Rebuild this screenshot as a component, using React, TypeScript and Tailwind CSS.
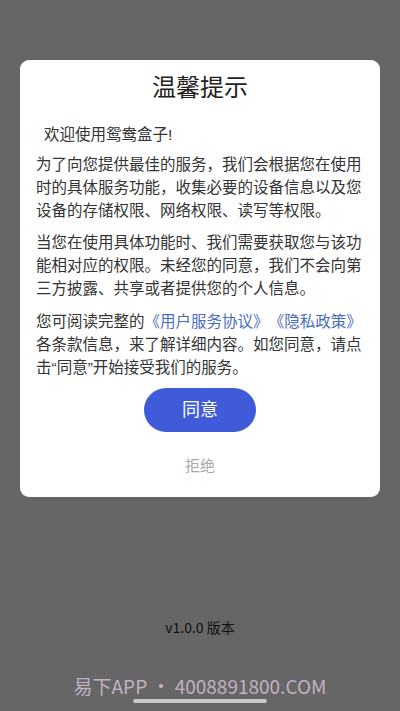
const body = "text-[15.5px] leading-[23px] text-[#333]";

export default function App() {
  return (
    <div
      className="relative flex h-[711px] w-[400px] flex-col items-center overflow-hidden bg-[#666666]"
      style={{ fontFamily: '"Noto Sans CJK SC", "Noto Sans", sans-serif' }}
    >
      <div
        className="mt-[60px] flex w-[360px] flex-col rounded-[9px] bg-white px-[16px] pt-[12px] pb-[21px]"
        style={{ fontFamily: '"Liberation Sans", "Noto Sans CJK SC", sans-serif' }}
      >
        <h1 className="text-center text-[24px] leading-[32px] font-normal text-[#222]">温馨提示</h1>
        <p className={`mt-[19px] ml-[8px] ${body}`}>欢迎使用鸳鸯盒子!</p>
        <p className={`mt-[7px] ${body}`}>
          为了向您提供最佳的服务，我们会根据您在使用时的具体服务功能，收集必要的设备信息以及您设备的存储权限、网络权限、读写等权限。
        </p>
        <p className={`mt-[9px] ${body}`}>
          当您在使用具体功能时、我们需要获取您与该功能相对应的权限。未经您的同意，我们不会向第三方披露、共享或者提供您的个人信息。
        </p>
        <p className={`mt-[10px] ${body}`}>
          您可阅读完整的<span className="text-[#4a6cc0]">《用户服务协议》</span>
          <span className="ml-[8px] text-[#4a6cc0]">《隐私政策》</span>各条款信息，来了解详细内容。如您同意，请点击“同意”开始接受我们的服务。
        </p>
        <div className="mt-[9px] flex justify-center">
          <button className="h-[44px] w-[112px] rounded-full bg-[#3f5bd9] text-[18px] text-white">同意</button>
        </div>
        <div className="mt-[24px] text-center text-[15px] leading-[20px] text-[#aaaaaa]">拒绝</div>
      </div>
      <div className="mt-[120px] text-[14px] leading-[20px] text-[#111]">v1.0.0 版本</div>
      <div className="mt-[37px] text-[19px] leading-[24px] text-[#c4b0c4]">易下APP • 4008891800.COM</div>
      <div className="absolute bottom-[8px] left-[133px] h-[4px] w-[134px] rounded-full bg-[#c8c8c8]" />
    </div>
  );
}
